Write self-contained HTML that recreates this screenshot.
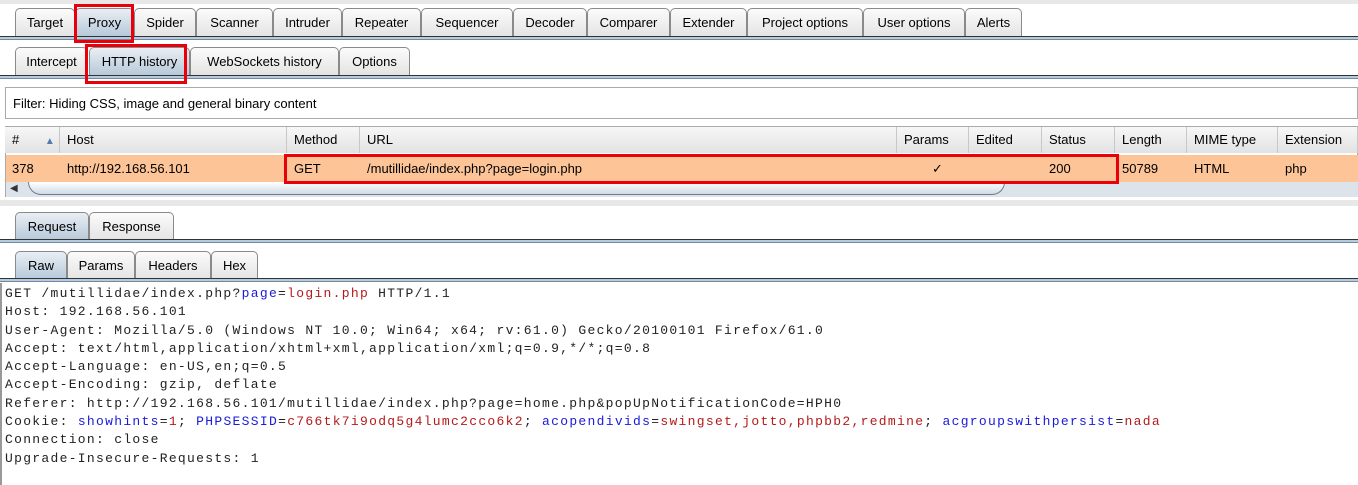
<!DOCTYPE html>
<html><head><meta charset="utf-8"><style>
*{box-sizing:border-box;margin:0;padding:0}
body{width:1358px;height:485px;background:#fff;font-family:"Liberation Sans",Arial,sans-serif;font-size:13px;color:#000;position:relative;overflow:hidden}
.a{position:absolute}
.tab{position:absolute;height:28px;border:1px solid #8a8a8a;border-bottom:none;border-radius:5px 5px 0 0;background:linear-gradient(#fbfbfb,#e4e4e4);text-align:center;line-height:28px;font-size:13px}
.sel{background:linear-gradient(#e9eef3,#b7c9da)}
.bar{position:absolute;left:0;width:1358px;height:4px;background:#b8cbdc;border-top:1px solid #333;border-bottom:1px solid #6f8aa3}
.red{position:absolute;border:3px solid #e8000b}
.th{position:absolute;top:127px;height:26px;line-height:26px;padding-left:7px;border-right:1px solid #c8c8c8;background:linear-gradient(#f7f7f7,#e2e2e2);font-size:13px}
.td{position:absolute;top:155px;height:27px;line-height:27px;padding-left:7px;font-size:13px}
pre{position:absolute;left:5px;top:285px;font-family:"Liberation Mono",monospace;font-size:13px;letter-spacing:1.3px;line-height:18.3px;color:#222}
.b{color:#1a1adb}.r{color:#b51a1a}
</style></head><body>
<div class="a" style="left:0;top:0;width:1358px;height:4px;background:#e8e8e8"></div>
<div class="tab" style="left:15px;top:8px;width:60px">Target</div>
<div class="tab sel" style="left:75px;top:8px;width:59px">Proxy</div>
<div class="tab" style="left:134px;top:8px;width:62px">Spider</div>
<div class="tab" style="left:196px;top:8px;width:77px">Scanner</div>
<div class="tab" style="left:273px;top:8px;width:69px">Intruder</div>
<div class="tab" style="left:342px;top:8px;width:79px">Repeater</div>
<div class="tab" style="left:421px;top:8px;width:92px">Sequencer</div>
<div class="tab" style="left:513px;top:8px;width:74px">Decoder</div>
<div class="tab" style="left:587px;top:8px;width:83px">Comparer</div>
<div class="tab" style="left:670px;top:8px;width:77px">Extender</div>
<div class="tab" style="left:747px;top:8px;width:116px">Project options</div>
<div class="tab" style="left:863px;top:8px;width:102px">User options</div>
<div class="tab" style="left:965px;top:8px;width:57px">Alerts</div>
<div class="bar" style="top:36px"></div>
<div class="red" style="left:74px;top:4px;width:60px;height:39px"></div>

<div class="tab" style="left:15px;top:47px;width:73px">Intercept</div>
<div class="tab sel" style="left:89px;top:47px;width:101px">HTTP history</div>
<div class="tab" style="left:190px;top:47px;width:149px">WebSockets history</div>
<div class="tab" style="left:339px;top:47px;width:71px">Options</div>
<div class="bar" style="top:75px"></div>
<div class="red" style="left:85px;top:44px;width:102px;height:40px"></div>

<div class="a" style="left:5px;top:87px;width:1353px;height:32px;border:1px solid #aaa;line-height:32px;padding-left:7px;font-size:13px">Filter: Hiding CSS, image and general binary content</div>

<div class="a" style="left:5px;top:126px;width:1353px;height:71px;border:1px solid #aaa;background:#fff"></div>
<div class="th" style="left:5px;width:55px"># <span style="color:#4f7eab;font-size:10px;margin-left:22px">▲</span></div>
<div class="th" style="left:60px;width:227px">Host</div>
<div class="th" style="left:287px;width:73px">Method</div>
<div class="th" style="left:360px;width:537px">URL</div>
<div class="th" style="left:897px;width:72px">Params</div>
<div class="th" style="left:969px;width:73px">Edited</div>
<div class="th" style="left:1042px;width:73px">Status</div>
<div class="th" style="left:1115px;width:72px">Length</div>
<div class="th" style="left:1187px;width:91px">MIME type</div>
<div class="th" style="left:1278px;width:80px">Extension</div>
<div class="a" style="left:6px;top:155px;width:1352px;height:27px;background:#fdc497"></div>
<div class="td" style="left:5px">378</div>
<div class="td" style="left:60px">http://192.168.56.101</div>
<div class="td" style="left:287px">GET</div>
<div class="td" style="left:360px">/mutillidae/index.php?page=login.php</div>
<div class="td" style="left:925px">✓</div>
<div class="td" style="left:1042px">200</div>
<div class="td" style="left:1115px">50789</div>
<div class="td" style="left:1187px">HTML</div>
<div class="td" style="left:1278px">php</div>
<div class="a" style="left:6px;top:182px;width:1352px;height:15px;background:#dde3ea"></div>
<div class="a" style="left:10px;top:183px;font-size:10px;color:#333">◀</div>
<div class="a" style="left:28px;top:182px;width:977px;height:13px;border:1px solid #778;border-top:none;border-radius:0 0 14px 14px;background:linear-gradient(#fff,#cfdbe8)"></div>
<div class="red" style="left:284px;top:154px;width:835px;height:30px"></div>
<div class="a" style="left:0;top:200px;width:1358px;height:6px;background:#e8e8e8"></div>

<div class="tab sel" style="left:15px;top:212px;width:74px">Request</div>
<div class="tab" style="left:89px;top:212px;width:85px">Response</div>
<div class="bar" style="top:239px"></div>
<div class="tab sel" style="left:15px;top:251px;width:52px">Raw</div>
<div class="tab" style="left:67px;top:251px;width:68px">Params</div>
<div class="tab" style="left:135px;top:251px;width:76px">Headers</div>
<div class="tab" style="left:211px;top:251px;width:47px">Hex</div>
<div class="bar" style="top:278px"></div>
<div class="a" style="left:0;top:283px;width:2px;height:202px;background:#999"></div>
<pre>GET /mutillidae/index.php?<span class="b">page</span>=<span class="r">login.php</span> HTTP/1.1
Host: 192.168.56.101
User-Agent: Mozilla/5.0 (Windows NT 10.0; Win64; x64; rv:61.0) Gecko/20100101 Firefox/61.0
Accept: text/html,application/xhtml+xml,application/xml;q=0.9,*/*;q=0.8
Accept-Language: en-US,en;q=0.5
Accept-Encoding: gzip, deflate
Referer: http://192.168.56.101/mutillidae/index.php?page=home.php&amp;popUpNotificationCode=HPH0
Cookie: <span class="b">showhints</span>=<span class="r">1</span>; <span class="b">PHPSESSID</span>=<span class="r">c766tk7i9odq5g4lumc2cco6k2</span>; <span class="b">acopendivids</span>=<span class="r">swingset,jotto,phpbb2,redmine</span>; <span class="b">acgroupswithpersist</span>=<span class="r">nada</span>
Connection: close
Upgrade-Insecure-Requests: 1</pre>
</body></html>
